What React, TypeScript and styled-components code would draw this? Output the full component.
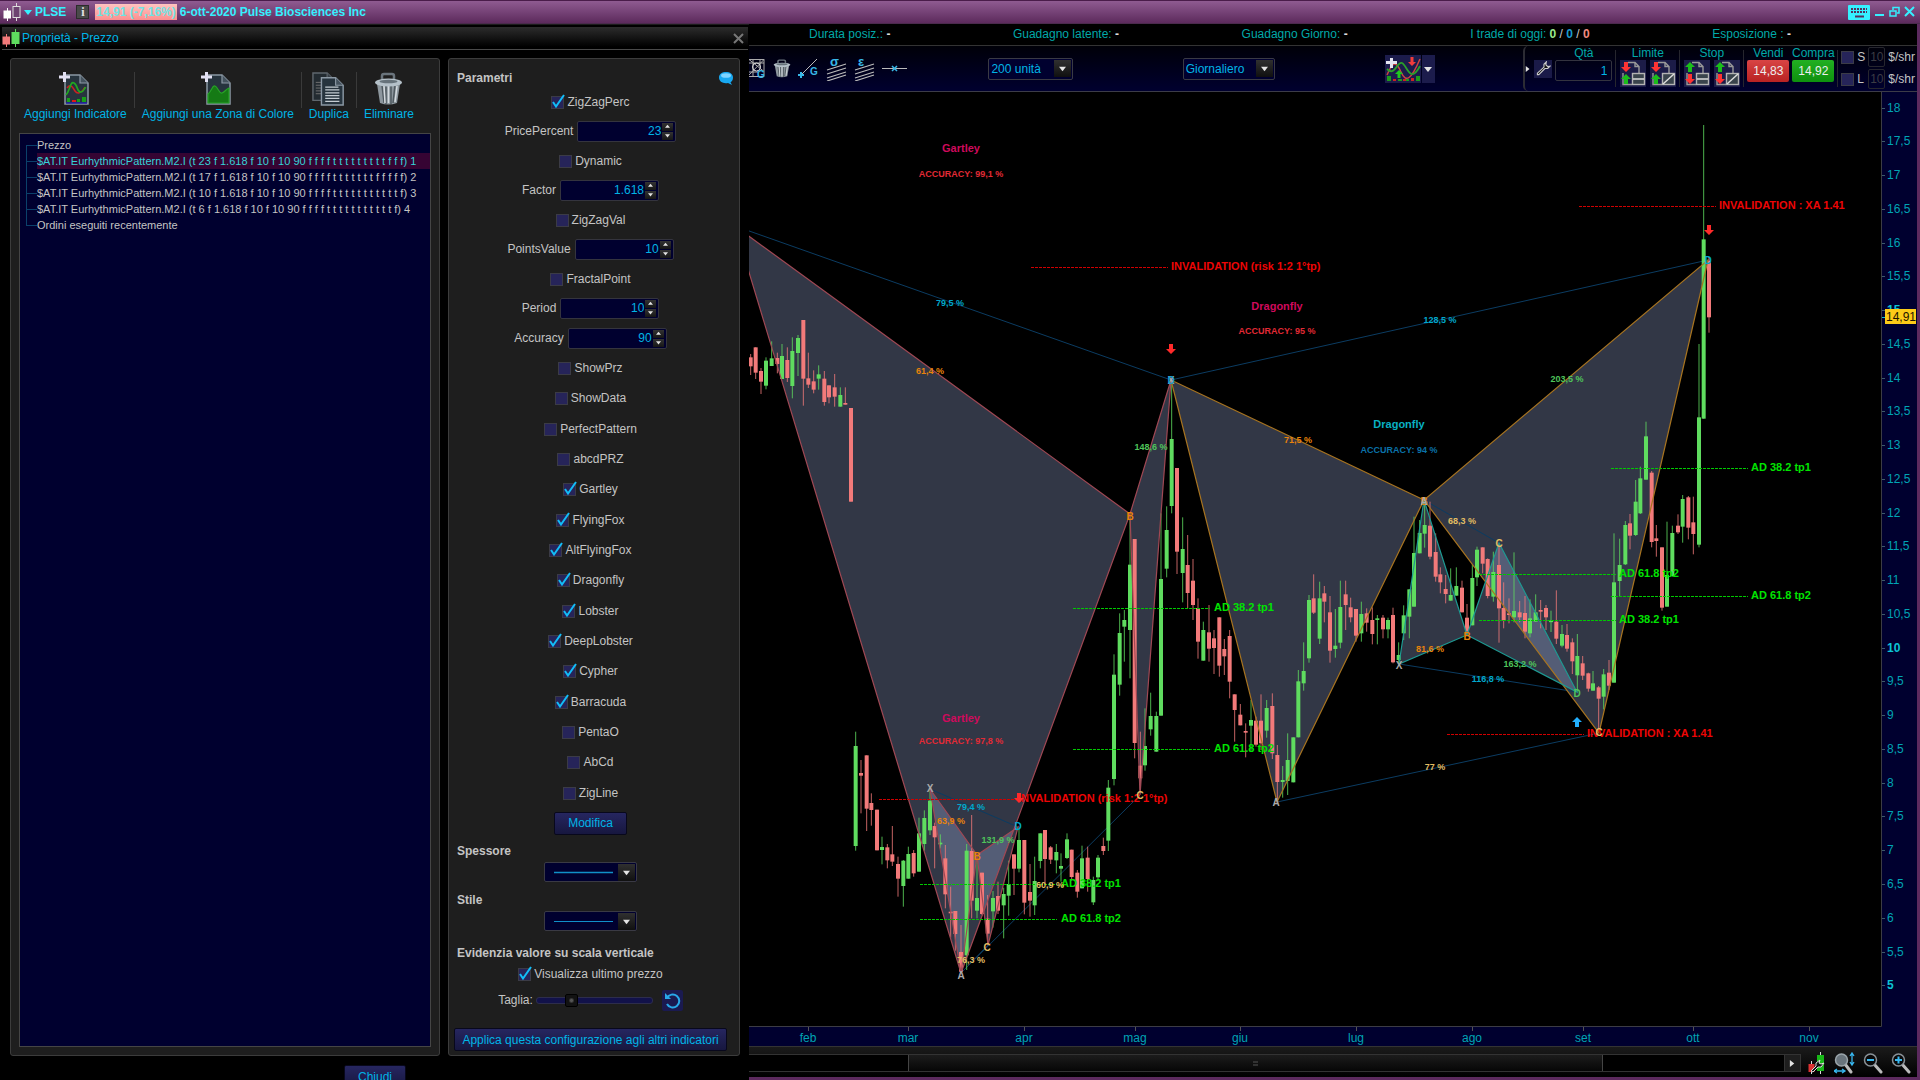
import React, { useState } from 'react';
import styled, { createGlobalStyle, css } from 'styled-components';

const c = {
  text: '#c4c4c4',
  cyan: '#00b4e6',
  teal: '#00a9a9',
  bright: '#35f0ff',
  navy: '#00002f',
  panel: '#1e1e1e',
  line: '#3c3c3c',
  purple: '#5c2a5e',
  up: '#5fdc5f',
  down: '#f27a7a',
};
const font = '"Liberation Sans", Arial, sans-serif';

const Global = createGlobalStyle`
  * { box-sizing: border-box; }
  html, body { margin: 0; background: #000; overflow: hidden; }
  body, button, input, select { font-family: ${font}; font-size: 12px; line-height: 16px; }
  button, input, select { margin: 0; padding: 0; border: 0; background: none; color: inherit; border-radius: 0; }
  button { cursor: pointer; }
  svg { display: block; flex: none; }
`;

const Screen = styled.div`
  height: 100vh;
  display: flex;
  flex-direction: column;
  background: #000;
  color: ${c.text};
  overflow: hidden;
`;

/* ---------- title bar ---------- */

const TitleBar = styled.header`
  flex: none;
  height: 24px;
  display: flex;
  align-items: center;
  gap: 3px;
  padding: 0 5px 0 3px;
  border-top: 1px solid #4a1c4a;
  border-bottom: 1px solid #4b2a4d;
  background: linear-gradient(#8f5b91, #5c2a5c);
  color: ${c.bright};
  font-weight: bold;
`;
const Symbol = styled.button`
  display: flex;
  align-items: center;
  gap: 3px;
  font-weight: bold;
`;
const InfoBadge = styled.button`
  width: 13px;
  height: 14px;
  margin: 0 3px 0 7px;
  background: #4a4a4a;
  border: 1px solid #2c2c2c;
  color: #e4e4e4;
  font: bold 12px/12px "Liberation Serif", serif;
`;
const Change = styled.span`
  height: 16px;
  padding: 0 1px;
  background: linear-gradient(#ffc4c0, #fb8f8f);
  color: #6fe4e4;
`;
const WindowTools = styled.div`
  margin-left: auto;
  display: flex;
  align-items: center;
  gap: 4px;
`;

/* ---------- dialog ---------- */

const Main = styled.div`
  flex: 1;
  min-height: 0;
  display: flex;
`;
const Dialog = styled.section`
  flex: none;
  width: 749px;
  display: flex;
  flex-direction: column;
  padding: 2px 1px 0 2px;
  border-top: 1px solid #1c1c1c;
`;
const DialogTitle = styled.div`
  flex: none;
  height: 23px;
  display: flex;
  align-items: center;
  gap: 2px;
  padding-right: 4px;
  border-bottom: 1px solid #4a4a4a;
  background: linear-gradient(#2c2c2c, #000 90%);
  color: ${c.cyan};
`;
const CloseButton = styled.button`
  margin-left: auto;
`;
const Columns = styled.div`
  flex: 1;
  min-height: 0;
  display: flex;
  gap: 8px;
  padding: 8px 8px 0;
`;
const panel = css`
  display: flex;
  flex-direction: column;
  background: ${c.panel};
  border: 1px solid ${c.line};
  border-radius: 3px;
`;
const ListPanel = styled.div`
  ${panel}
  flex: 1;
  min-width: 0;
  padding: 13px 8px 8px;
`;
const ParamPanel = styled.div`
  ${panel}
  flex: none;
  width: 292px;
  padding: 0 12px 4px 5px;
`;
const Tools = styled.div`
  height: 61px;
  display: flex;
`;
const Tool = styled.button`
  display: flex;
  flex-direction: column;
  align-items: center;
  justify-content: flex-start;
  padding: 0 7px;
  color: ${c.cyan};
  white-space: nowrap;
  &:first-child { padding-left: 5px; }
`;
const ToolSeparator = styled.span`
  width: 1px;
  height: 36px;
  background: #3a3a3a;
`;
const Tree = styled.ul`
  flex: 1;
  margin: 0;
  padding: 3px 0 0 6px;
  list-style: none;
  background: ${c.navy};
  border: 1px solid #454545;
  overflow: hidden;
`;
const TreeItem = styled.li<{ $edge?: 'first' | 'last'; $selected?: boolean }>`
  height: 16px;
  display: flex;
  white-space: nowrap;
  &::before {
    content: '';
    flex: none;
    width: 10px;
    height: ${(p) => (p.$edge === 'first' ? '8px' : p.$edge === 'last' ? '9px' : '16px')};
    margin-top: ${(p) => (p.$edge === 'first' ? '8px' : '0')};
    border-left: 1px solid #0b416b;
    background: linear-gradient(#0b416b, #0b416b) 0 ${(p) => (p.$edge === 'first' ? '0' : '8px')} / 10px 1px no-repeat;
  }
  button {
    flex: 1;
    font-size: 11px;
    text-align: left;
    white-space: nowrap;
    color: ${(p) => (p.$selected ? '#36d2d8' : c.text)};
    background: ${(p) => (p.$selected ? '#360433' : 'none')};
  }
`;
const DialogFooter = styled.div`
  flex: none;
  height: 24px;
  display: flex;
  justify-content: center;
  align-items: flex-start;
  padding-top: 9px;
  overflow: hidden;
`;
const Action = styled.button<{ $tight?: boolean }>`
  flex: none;
  height: 23px;
  padding: 0 ${(p) => (p.$tight ? 4 : 13)}px;
  color: ${c.cyan};
  background: linear-gradient(#262660, #17173f);
  border: 1px solid #08081c;
  border-radius: 2px;
  white-space: nowrap;
`;

/* ---------- parameters ---------- */

const PanelHead = styled.div`
  flex: none;
  height: 28px;
  display: flex;
  align-items: center;
  justify-content: space-between;
  padding: 10px 0 0 3px;
  font-weight: bold;
  margin-right: -6px;
`;
const Heading = styled.h3<{ $gap?: number }>`
  flex: none;
  height: 24px;
  margin: ${(p) => p.$gap ?? 0}px 0 0;
  padding-left: 3px;
  font-size: 12px;
  line-height: 26px;
`;
const CheckRow = styled.label<{ $height: number }>`
  flex: none;
  height: ${(p) => p.$height}px;
  display: flex;
  align-items: center;
  justify-content: center;
  gap: 3px;
`;
const ToggleList = styled.div`
  flex: 1;
  min-height: 0;
  display: flex;
  flex-direction: column;
  & > label { flex: 1 1 0; min-height: 0; }
`;
const CheckHolder = styled.span`
  display: grid;
  margin-top: 1px;
  & > * { grid-area: 1 / 1; }
  svg { pointer-events: none; overflow: visible; }
`;
const CheckInput = styled.input`
  appearance: none;
  flex: none;
  width: 13px;
  height: 13px;
  background: #262459;
  border: 1px solid #3b3b46;
`;
const NumberRow = styled.label`
  flex: none;
  height: 30px;
  display: flex;
  align-items: center;
  justify-content: center;
  gap: 4px;
`;
const NumberBox = styled.span`
  width: 99px;
  height: 21px;
  display: flex;
  align-items: center;
  padding-right: 2px;
  background: ${c.navy};
  border: 1px solid #34343e;
  border-radius: 2px;
  input {
    flex: 1;
    min-width: 0;
    padding-right: 1px;
    text-align: right;
    color: ${c.cyan};
  }
`;
const Steps = styled.span`
  flex: none;
  display: flex;
  flex-direction: column;
  gap: 1px;
  button {
    width: 11px;
    height: 8px;
    display: grid;
    place-items: center;
    background: linear-gradient(#333, #161616);
  }
`;
const Centered = styled.div<{ $height?: number }>`
  flex: none;
  height: ${(p) => (p.$height ? p.$height + 'px' : 'auto')};
  display: flex;
  align-items: center;
  justify-content: center;
`;
const SelectHolder = styled.span<{ $width: number; $height: number }>`
  flex: none;
  display: grid;
  align-items: center;
  width: ${(p) => p.$width}px;
  height: ${(p) => p.$height}px;
  background: ${c.navy};
  border: 1px solid #3a3a44;
  border-radius: 2px;
  & > * { grid-area: 1 / 1; }
  & > svg { pointer-events: none; margin-left: 9px; }
  select {
    appearance: none;
    width: 100%;
    height: 100%;
    padding-left: 2px;
    color: ${c.cyan};
  }
`;
const DropArrow = styled.span`
  justify-self: end;
  width: 17px;
  height: 17px;
  margin-right: 1px;
  display: grid;
  place-items: center;
  background: linear-gradient(#303030, #101010);
  pointer-events: none;
`;
const SizeRow = styled.div`
  flex: none;
  height: 32px;
  display: flex;
  align-items: center;
  justify-content: center;
  gap: 3px;
  margin-bottom: 12px;
`;
const Range = styled.input`
  appearance: none;
  width: 117px;
  height: 7px;
  margin-right: 6px;
  background: #12124a;
  border: 1px solid #2d2d4c;
  border-radius: 3px;
  &::-webkit-slider-thumb {
    appearance: none;
    width: 13px;
    height: 13px;
    background: radial-gradient(circle, #555 1px, #121212 3px);
    border: 1px solid #000;
    border-radius: 2px;
  }
`;
const ResetButton = styled.button`
  width: 21px;
  height: 21px;
  display: grid;
  place-items: center;
  background: #1a1a50;
  border-radius: 2px;
`;

/* ---------- chart side ---------- */

const ChartSide = styled.main`
  flex: 1;
  min-width: 0;
  display: flex;
  flex-direction: column;
  border-right: 3px solid ${c.purple};
  border-bottom: 3px solid ${c.purple};
`;
const InfoBar = styled.div`
  flex: none;
  height: 22px;
  display: flex;
  align-items: center;
  justify-content: space-between;
  padding: 0 126px 2px 60px;
  border-bottom: 1px solid #333;
  color: ${c.teal};
  white-space: nowrap;
  b { color: #ddd; }
`;
const Count = styled.strong<{ $color: string }>`
  && { color: ${(p) => p.$color}; }
`;
const Slash = styled.span`
  color: #ccc;
`;
const Toolbar = styled.div`
  flex: none;
  height: 46px;
  display: flex;
  align-items: center;
  background: linear-gradient(#000008, #00002f);
  border-bottom: 1px solid #3c3c48;
`;
const DrawTools = styled.div`
  display: flex;
  gap: 7px;
  button { display: grid; place-items: center; }
`;
const Spring = styled.span<{ $grow: number }>`
  flex: ${(p) => p.$grow} 1 0;
`;
const IndicatorButton = styled.button`
  display: flex;
  align-items: center;
  gap: 1px;
  height: 28px;
`;
const ArrowPart = styled.span`
  width: 13px;
  height: 28px;
  display: grid;
  place-items: center;
  background: #1c1c4c;
`;
const OrderPanel = styled.div`
  flex: none;
  height: 45px;
  display: flex;
  align-items: stretch;
  gap: 3px;
  padding: 0 2px 0 0;
  border-left: 2px solid #2c2c34;
  border-radius: 5px;
`;
const OrderColumn = styled.div<{ $width: number }>`
  width: ${(p) => p.$width}px;
  display: flex;
  flex-direction: column;
  align-items: center;
  color: ${c.teal};
  line-height: 14px;
`;
const OrderPair = styled.div`
  display: flex;
  gap: 4px;
`;
const OrderButton = styled.button`
  width: 26px;
  height: 27px;
  background: #1c1c48;
`;
const QtyInput = styled.input`
  width: 57px;
  height: 21px;
  padding-right: 4px;
  text-align: right;
  color: ${c.cyan};
  border: 1px solid #33333f;
  border-radius: 2px;
`;
const PriceButton = styled.button<{ $color: string }>`
  width: 42px;
  height: 22px;
  color: #eee;
  background: ${(p) => p.$color};
  border-radius: 2px;
`;
const OrderSeparator = styled.span`
  width: 1px;
  margin: 4px 0;
  background: #26262e;
`;
const Wrench = styled.button`
  align-self: center;
  width: 18px;
  height: 18px;
  display: grid;
  place-items: center;
  background: #1a1a48;
`;
const FeeColumn = styled.div`
  display: flex;
  flex-direction: column;
`;
const FeeRow = styled.div`
  height: 22px;
  display: flex;
  align-items: center;
  gap: 3px;
  color: ${c.text};
`;
const FeeToggle = styled.label`
  width: 24px;
  display: flex;
  align-items: center;
  gap: 3px;
`;
const FeeInput = styled.input`
  width: 17px;
  height: 20px;
  text-align: center;
  color: #3c3c44;
  border: 1px solid #26262e;
  border-radius: 2px;
`;
const ChartArea = styled.div`
  flex: 1;
  min-height: 0;
  svg { width: 100%; height: 100%; }
`;
const BottomBar = styled.div`
  flex: none;
  height: 31px;
  display: flex;
  align-items: center;
  padding: 2px 6px 0 0;
  border-top: 1px solid #333;
  background: linear-gradient(#1b1b1b, #000);
`;
const ScrollTrack = styled.div`
  flex: 1;
  height: 18px;
  display: flex;
  background: #000;
  border-top: 1px solid #333;
  border-bottom: 1px solid #333;
`;
const ScrollGap = styled.span<{ $grow: number }>`
  flex: ${(p) => p.$grow} 1 0;
`;
const ScrollThumb = styled.button`
  flex: 694 1 0;
  display: grid;
  place-items: center;
  background: linear-gradient(#1c1c1c, #060606);
  border-left: 1px solid #444;
  border-right: 1px solid #444;
`;
const ScrollEnd = styled.button`
  width: 17px;
  height: 18px;
  display: grid;
  place-items: center;
  background: #1e1e1e;
  border: 1px solid #333;
`;
const ZoomTools = styled.div`
  display: flex;
  align-items: center;
  gap: 8px;
  margin-left: 7px;
`;

/* ---------- small drawings ---------- */

const Triangle = ({ dir = 'down', size = 7, color = '#e4e4e4' }: { dir?: string; size?: number; color?: string }) => (
  <svg width={size} height={size} viewBox="0 0 8 8">
    <path fill={color} d={dir === 'down' ? 'M0 2h8L4 7z' : dir === 'up' ? 'M0 6h8L4 1z' : 'M1 0v8l5-4z'} />
  </svg>
);

const CandlePair = ({ a, b, hollow }: { a: string; b: string; hollow?: boolean }) => (
  <svg width="18" height="19" viewBox="0 0 18 19">
    <path stroke={a} d="M4.500 5v13" />
    <rect x="0.500" y="7.500" width="7.500" height="8" fill={a} />
    <path stroke={b} d="M13.500 0v3M13.500 14v4" />
    <rect x="10" y="3.500" width="7" height="11" fill={hollow ? '#6d4270' : b} stroke={b} />
  </svg>
);

const Doc = ({ x = 0, y = 0, children }: { x?: number; y?: number; children?: React.ReactNode }) => (
  <g transform={`translate(${x} ${y})`}>
    <path d="M1 1h15l8 8v21H1z" fill="#27343e" stroke="#8b98a4" strokeWidth="1.500" />
    <path d="M16 1v8h8" fill="#45535e" stroke="#8b98a4" strokeWidth="1.200" />
    {children}
  </g>
);

const PlusSign = () => <path d="M4 0h3v3.500h4v3H7V10H4V6.500H0v-3h4z" fill="#e2e0f2" />;

const AddIndicatorIcon = () => (
  <svg width="33" height="34" viewBox="0 0 33 34">
    <Doc x={5} y={2}>
      <path d="M3 14c4-5 6 0 8 3s6 3 10-4" fill="none" stroke="#c22" strokeWidth="1.500" />
      <path d="M2 21c4-4 4-14 8-12s3 10 7 9 3-5 5-4" fill="none" stroke="#20a820" strokeWidth="1.700" />
      <path d="M3 24h3v4H3zM13 25h3v3h-3zM18 23h4v5h-4z" fill="#18a018" />
      <path d="M8 26h4v2H8z" fill="#e01818" />
      <path d="M2 29h21" stroke="#22a" strokeWidth="1.500" />
    </Doc>
    <PlusSign />
  </svg>
);
const AddZoneIcon = () => (
  <svg width="33" height="34" viewBox="0 0 33 34">
    <Doc x={5} y={2}>
      <path d="M2 20c4-3 4-9 7-8s4 8 7 7 4-4 7-5v15H2z" fill="#157a15" stroke="#27a327" strokeWidth="1.200" />
    </Doc>
    <PlusSign />
  </svg>
);
const DuplicateIcon = () => (
  <svg width="34" height="34" viewBox="0 0 36 36">
    <g opacity="0.600">
      <Doc><path d="M4 11h12M4 14h12M4 17h12M4 20h12M4 23h12" stroke="#aaa" /></Doc>
    </g>
    <Doc x={9} y={5}><path d="M5 11h14M5 14h15M5 17h15M5 20h15M5 23h15M5 26h15" stroke="#c4ccd2" strokeWidth="1.300" /></Doc>
  </svg>
);
const TrashIcon = ({ width = 29, height = 34 }: { width?: number; height?: number }) => (
  <svg width={width} height={height} viewBox="0 0 29 34" preserveAspectRatio="none">
    <path d="M8 8V4q0-2 2-2h8q2 0 2 2v4" fill="none" stroke="#6a747c" strokeWidth="2.500" />
    <path d="M3 12l3 19q8 3 17 0l3-19z" fill="#8d979e" />
    <path d="M8 13l2 18M12 14v18M17 14v18M21 13l-2 18" stroke="#4f595f" strokeWidth="1.500" />
    <path d="M10 14l1 17M14.500 14v17M23 14l-2 16" stroke="#d4dade" strokeWidth="1.500" />
    <ellipse cx="14.500" cy="10.500" rx="13.500" ry="4" fill="#b4c0c8" />
    <ellipse cx="14.500" cy="9.500" rx="9" ry="1.800" fill="#66727a" />
  </svg>
);

const GridGIcon = () => (
  <svg width="17" height="21" viewBox="0 0 17 21">
    <path d="M0 1.500h15v17H0M0 5h15M0 14h9M4 1.500v17M11 1.500v8M0 1.500l15 12M15 1.500L0 17" fill="none" stroke="#aaa" />
    <circle cx="7.500" cy="9" r="4" fill="none" stroke="#ddd" />
    <text x="8" y="20" fontSize="10" fontWeight="bold" fontFamily={font} fill="#38b8e8">G</text>
  </svg>
);
const LineGIcon = () => (
  <svg width="21" height="21" viewBox="0 0 21 21">
    <path d="M3 17L19 1" stroke="#bbb" />
    <path d="M0 17h6M3 14v6" stroke="#38b8e8" strokeWidth="2" />
    <text x="12" y="17" fontSize="10" fontWeight="bold" fontFamily={font} fill="#38b8e8">G</text>
  </svg>
);
const ChannelIcon = ({ letter }: { letter: string }) => (
  <svg width="21" height="24" viewBox="0 0 21 24">
    <path d="M1 13L20 7M1 17l19-6M1 21l19-6M1 24l19-6" stroke="#bbb" strokeWidth="1.200" />
    <text x="4" y="9" fontSize="13" fontWeight="bold" fontFamily={font} fill="#38b8e8">{letter}</text>
  </svg>
);
const LineXIcon = () => (
  <svg width="25" height="21" viewBox="0 0 25 21">
    <path d="M0 10.500h25" stroke="#bbb" />
    <path d="M10 8l5 5M15 8l-5 5" stroke="#38b8e8" strokeWidth="1.500" />
  </svg>
);
const IndicatorIcon = () => (
  <svg width="36" height="28" viewBox="0 0 36 28">
    <rect width="36" height="28" fill="#1c1c4c" />
    <path d="M2 20c6-14 9-14 14-3s10 8 19-13" fill="none" stroke="#c44" strokeWidth="1.500" />
    <path d="M2 14c8 8 10-8 15-6s8 22 18 3" fill="none" stroke="#2aa02a" strokeWidth="1.800" />
    <path d="M5 3h3v3h4v3H8v4H5V9H1V6h4z" fill="#e4e4f0" />
    <path d="M14 15l-4 4h2.500v4h3v-4H18z" fill="#1ec81e" />
    <path d="M27 11l-4-4h2.500V2h3v5H31z" fill="#f23c3c" />
    <path d="M2 21h4v5H2zM13 24h4v2h-4zM31 21h4v5h-4zM21 24h3v2h-3z" fill="#1c9c1c" />
    <path d="M8 24h3v2H8zM18 24h3v2h-3zM26 23h3v3h-3z" fill="#c22" />
  </svg>
);
const OrderIcon = ({ top, topDir, diagonal }: { top: string; topDir: 'up' | 'down'; diagonal?: boolean }) => {
  const bottom = top === '#f33' ? '#1bbd1b' : '#f33';
  const up = 'M6 2l-5 5h3v5h4V7h3z';
  const down = 'M6 12L1 7h3V2h4v5h3z';
  return (
    <svg width="26" height="27" viewBox="0 0 26 27">
      <path d="M8 2.500h7l4 4V13M15 2.500v4h4M3 13v11.500h9" fill="none" stroke="#999" strokeWidth="1.400" />
      <path d={topDir === 'up' ? up : down} fill={top} />
      <g transform="translate(0 12)"><path d={topDir === 'up' ? down : up} fill={bottom} /></g>
      <rect x="12.500" y="13.500" width="12" height="11" fill="#3a444c" stroke="#b4b4b4" strokeWidth="1.400" />
      <path d={diagonal ? 'M13 24l11-10' : 'M13 19h11'} stroke="#ddd" strokeWidth="1.500" />
    </svg>
  );
};
const WrenchShape = ({ size = 15 }: { size?: number }) => (
  <svg width={size} height={size} viewBox="0 0 16 16">
    <path d="M11 1L8.500 3.500v3L1.500 13v1.500H3L9.500 8h3L15 5.500l-2.500.5-2-2z" fill="#111" stroke="#ccc" strokeWidth="1.200" />
  </svg>
);
const Magnifier = ({ sign }: { sign?: string }) => (
  <svg width="20" height="22" viewBox="0 0 20 22">
    <path d="M11 12l7 8" stroke="#bbb" strokeWidth="3" strokeLinecap="round" />
    <circle cx="7.500" cy="8" r="6" fill="#0a0a0a" stroke="#8a9298" strokeWidth="1.500" />
    <path d={sign === '+' ? 'M4 8h7M7.500 4.500v7' : 'M4 8h7'} stroke="#38b8f0" strokeWidth="2" />
  </svg>
);

/* ---------- chart data ---------- */

type Segment = { x: number; y: number; step: number; bars: string };

// Each bar: colour, x, high, body top, body bottom, low, relative to the segment origin.
const segments: Segment[] = [
  {
    x: 740, y: 240, step: 3,
    bars: `r32 342 352 379 405,r47 322 322 398 417,r63 384 393 425 462,g78 352 362 437 448,g95 304 355 378 378,r112 338 354 372 400,g126 312 348 417 417,r142 322 360 414 426,g157 292 333 438 475,g174 285 294 339 408,r190 240 240 416 497,r205 338 415 434 444,r221 391 424 449 460,g236 376 403 416 449,r253 393 416 486 497,r267 436 436 472 490,r284 402 442 470 500,g301 442 465 500 500,r316 442 489 494 494,r333 504 504 785 785,g1139 1120 1179 1334 1367,g1153 1110 1140 1160 1265,g1170 830 974 1170 1315,r1184 897 897 1509 1555,g1263 820 1017 1427 1427,g1280 799 870 986 1012,g1295 425 597 798 820,r1311 684 684 935 1002,g1328 832 927 999 1087,r1343 885 975 1059 1105,r1359 957 1022 1095 1140,r1374 1075 1104 1205 1256,g1390 1145 1170 1262 1262,r1407 1095 1177 1226 1265,r1422 1170 1195 1224 1302,r1438 1132 1132 1277 1310`,
  },
  {
    x: 740, y: 640, step: 3,
    bars: `g347 275 318 618 632,r363 360 399 407 520,r380 346 346 506 573,r394 460 489 510 557,r411 509 509 631 631,g426 590 621 630 673,r442 612 622 661 685,r457 558 643 665 678,r474 650 672 716 770,g490 660 662 738 800,g505 620 642 716 716,r521 630 639 700 710,g537 533 580 695 695,g553 511 534 612 632,g570 445 482 571 585,r584 548 558 592 685,g601 583 608 613 625,r616 615 655 763 805,r632 740 815 820 893,r646 813 813 882 932,r663 855 936 995 1000,g680 612 632 946 990,r695 525 633 782 835,g711 655 774 812 835,r726 698 698 822 825,r743 765 836 881 915,g759 753 774 814 863,r774 725 768 812 822,g791 743 762 796 895,g806 662 732 767 827,r822 643 643 686 765,g837 560 600 686 697,r853 600 600 788 823,r870 672 756 782 830,g884 650 723 796 825,g901 580 580 663 685,r915 570 570 657 735,r932 618 622 659 672,g949 612 636 661 700,g963 640 678 686 725,g981 580 598 654 657,r995 629 629 711 722,r1012 690 698 755 773,g1026 617 655 745 745,r1043 620 653 717 755,g1060 710 720 787 795,g1074 645 653 712 722,r1090 593 618 633 645,g1105 420 443 602 633,g1122 43 104 417 436,r1201 275 377 415 460,g1215 205 318 376 392,g1232 158 228 268 287,g1249 215 228 335 335`,
  },
  {
    x: 1160, y: 600, step: 3,
    bars: `r193 117 147 169 225,r209 90 108 245 295,r224 283 283 330 425,r241 312 344 376 376,r257 370 393 398 472,g273 300 360 377 452,r288 350 362 434 440,r303 283 362 430 450,g320 300 324 392 413,r337 280 318 460 477,r352 435 465 546 600,g368 498 540 546 593,g383 400 480 543 585,g400 412 412 547 547,g415 210 244 412 412,g431 127 213 250 272,g447 -15 0 175 188,r461 -77 -5 38 42,g479 -55 -5 116 132,r493 -42 -20 5 67,r510 -12 37 152 188,g526 27 137 147 173,g541 -58 21 128 145,r557 -58 -17 15 90,r572 -7 22 52 67,r588 27 27 107 125,g604 5 42 100 125,r620 25 40 68 95,r637 22 60 102 133,g652 45 55 60 133,r669 45 53 88 115,g684 53 60 88 115,r699 23 45 187 190,g716 127 165 180 190`,
  },
  {
    x: 1360, y: 460, step: 3,
    bars: `g131 436 466 520 540,g148 388 388 470 535,g162 170 279 440 440,g179 180 219 280 280,g194 125 195 221 263,r210 125 197 290 298,r227 220 276 350 365,r241 322 343 367 400,r257 345 387 402 430,g272 325 405 422 422,g289 322 378 407 407,r306 362 383 457 457,r321 432 473 515 520,g337 313 354 496 496,g351 260 269 352 378,r368 262 262 311 340,r383 295 297 408 415,g400 275 336 410 425,r417 255 315 445 548,r431 367 444 481 505,r447 415 460 465 490,g462 277 453 472 487,r479 423 457 472 487,r495 408 459 515 535,g510 418 475 520 532,g527 403 457 485 485,r542 420 450 455 505,r558 435 444 472 510,g573 452 482 485 516,r589 391 485 536 552,g606 495 522 557 562,r621 492 525 566 575,r637 535 547 604 642,g652 522 588 646 695,r668 588 610 647 660,r685 638 640 686 695,g699 633 670 692 692,r716 678 682 716 815,g731 627 643 710 748,r747 600 638 677 690,g762 220 367 668 668,g779 236 315 363 408,g796 183 195 313 315,r810 162 190 227 268,g827 60 125 225 228,g841 20 55 160 162,g858 -115 -71 59 59,r875 33 38 246 262,r889 195 235 243 290,r906 262 262 443 452,g921 185 345 440 440,g937 197 219 348 350,r954 163 197 217 222,g968 105 117 200 248,r985 108 112 203 238,r1000 110 187 222 283,g1017 -348 -128 254 262,g1031 -1005 -662 -124 -124,r1047 -610 -598 -428 -382`,
  },
];

const bars = segments.flatMap((s) =>
  s.bars.split(',').map((raw) => {
    const [x, ...ys] = raw.slice(1).split(' ').map(Number);
    const [high, top, bottom, low] = ys.map((v) => s.y + v / s.step);
    return { color: raw[0] === 'g' ? c.up : c.down, x: s.x + x / s.step, high, top, bottom, low };
  }),
);

const ROSE = '#a04854';
const AMBER = '#a87420';
const SEA = '#1d9a92';
const patterns = [
  { color: ROSE, pts: [[735, 226], [961, 973], [1130, 514], [1140, 795], [1171, 380]] },
  { color: AMBER, pts: [[1171, 380], [1277, 802], [1424, 500], [1599, 733], [1708, 260]] },
  { color: ROSE, pts: [[930, 789], [961, 973], [977, 855], [988, 945], [1018, 827]] },
  { color: SEA, pts: [[1399, 664], [1424, 500], [1467, 635], [1499, 543], [1577, 692]] },
];
const path = (pts: number[][], ids: number[]) => 'M' + ids.map((i) => pts[i].join(' ')).join('L') + (ids.length > 2 ? 'Z' : '');

const levels: [number, number, string, number, string][] = [
  [1073, 608.5, '#00c800', 1214, 'AD 38.2 tp1'],
  [1073, 749.5, '#00c800', 1214, 'AD 61.8 tp2'],
  [920, 884.5, '#00c800', 1061, 'AD 38.2 tp1'],
  [920, 919.5, '#00c800', 1061, 'AD 61.8 tp2'],
  [1479, 574.5, '#00c800', 1619, 'AD 61.8 tp2'],
  [1479, 620.5, '#00c800', 1619, 'AD 38.2 tp1'],
  [1611, 468.5, '#00c800', 1751, 'AD 38.2 tp1'],
  [1611, 596.5, '#00c800', 1751, 'AD 61.8 tp2'],
  [1031, 267.5, '#d00000', 1171, 'INVALIDATION (risk 1:2 1°tp)'],
  [879, 799.5, '#d00000', 1018, 'INVALIDATION (risk 1:2 1°tp)'],
  [1447, 734.5, '#d00000', 1587, 'INVALIDATION : XA 1.41'],
  [1579, 206.5, '#d00000', 1719, 'INVALIDATION : XA 1.41'],
];

const CY = '#00a8cc';
const OR = '#e8830a';
const GR = '#4fc45a';
const YE = '#e2bd62';
const ratios: [number, number, string, string][] = [
  [950, 303, CY, '79,5 %'], [930, 371, OR, '61,4 %'], [1151, 447, GR, '148,6 %'],
  [971, 807, CY, '79,4 %'], [951, 821, OR, '63,9 %'], [998, 840, GR, '131,9 %'],
  [1050, 885, YE, '60,9 %'], [971, 960, YE, '76,3 %'], [1440, 320, CY, '128,5 %'],
  [1298, 440, OR, '71,5 %'], [1462, 521, YE, '68,3 %'], [1567, 379, GR, '203,5 %'],
  [1430, 649, OR, '81,6 %'], [1520, 664, GR, '163,2 %'], [1488, 679, CY, '116,8 %'],
  [1435, 767, YE, '77 %'],
  [961, 174, '#e22a35', 'ACCURACY: 99,1 %'], [1277, 331, '#e22a35', 'ACCURACY: 95 %'],
  [1399, 450, '#0a72aa', 'ACCURACY: 94 %'], [961, 741, '#e22a35', 'ACCURACY: 97,8 %'],
];
const names: [number, number, string, string][] = [
  [961, 148, '#cf0a5c', 'Gartley'], [1277, 306, '#cf0a5c', 'Dragonfly'],
  [1399, 424, '#08b0c4', 'Dragonfly'], [961, 718, '#cf0a5c', 'Gartley'],
];
const points: [number, number, string, string][] = [
  [1130, 516, OR, 'B'], [1171, 380, '#aaa', 'X'], [1171, 380, '#1a9ed0', 'D'],
  [1424, 501, OR, 'B'], [1424, 501, '#aaa', 'A'], [1140, 795, YE, 'C'],
  [930, 788, '#aaa', 'X'], [961, 975, '#aaa', 'A'], [977, 856, OR, 'B'],
  [987, 947, YE, 'C'], [1018, 826, CY, 'D'], [1276, 802, '#aaa', 'A'],
  [1399, 665, '#aaa', 'X'], [1467, 636, OR, 'B'], [1499, 543, YE, 'C'],
  [1577, 693, GR, 'D'], [1599, 732, YE, 'C'], [1708, 260, CY, 'D'],
];
const months: [number, string][] = [
  [808, 'feb'], [908, 'mar'], [1024, 'apr'], [1135, 'mag'], [1240, 'giu'],
  [1356, 'lug'], [1472, 'ago'], [1583, 'set'], [1693, 'ott'], [1809, 'nov'],
];
const prices = Array.from({ length: 27 }, (_, i) => 18 - i / 2);

const DownMark = ({ x, y }: { x: number; y: number }) => (
  <path d={`M${x - 2} ${y - 5}h4v5h3l-5 5-5-5h3z`} fill="#ff2a2a" />
);

const Chart = () => (
  <svg viewBox="749 92 1168 954" fontFamily={font} role="img" aria-label="Grafico PLSE giornaliero">
    <g fill="rgba(167,183,233,0.3)">
      {patterns.map((p, i) => (
        <React.Fragment key={i}>
          <path d={path(p.pts, [0, 1, 2])} />
          <path d={path(p.pts, [2, 3, 4])} />
        </React.Fragment>
      ))}
    </g>
    <g stroke="#0b3c62">
      {patterns.map((p, i) => (
        <React.Fragment key={i}>
          <path d={path(p.pts, [0, 4])} />
          <path d={path(p.pts, [1, 3])} />
        </React.Fragment>
      ))}
    </g>
    {bars.map((b, i) => (
      <g key={i} fill={b.color}>
        <rect x={b.x - 0.5} y={b.high} width="1" height={b.low - b.high} opacity="0.800" />
        <rect x={b.x - 2} y={b.top} width="4" height={Math.max(1.5, b.bottom - b.top)} />
      </g>
    ))}
    {patterns.map((p, i) => (
      <g key={i} fill="none" stroke={p.color} strokeWidth="1.200">
        <path d={path(p.pts, [0, 1, 2])} />
        <path d={path(p.pts, [2, 3, 4])} />
      </g>
    ))}
    {levels.map(([x, y, color, lx, label], i) => (
      <g key={i}>
        <path d={`M${x} ${y}h137`} stroke={color} strokeDasharray="3 1" />
        <text x={lx} y={Math.round(y) + 2} fontSize="11" fontWeight="bold" fill={color === '#d00000' ? '#ee0505' : '#00e400'}>{label}</text>
      </g>
    ))}
    <g fontSize="9" fontWeight="bold" textAnchor="middle">
      {ratios.map(([x, y, color, label]) => (
        <text key={label + x} x={x} y={y + 3} fill={color}>{label}</text>
      ))}
    </g>
    <g fontSize="11" fontWeight="bold" textAnchor="middle">
      {names.map(([x, y, color, label]) => (
        <text key={label + x} x={x} y={y + 4} fill={color}>{label}</text>
      ))}
    </g>
    <g fontSize="10" fontWeight="bold" textAnchor="middle">
      {points.map(([x, y, color, label], i) => (
        <text key={i} x={x} y={y + 4} fill={color}>{label}</text>
      ))}
    </g>
    <DownMark x={1171} y={349} />
    <DownMark x={1019} y={798} />
    <DownMark x={1709} y={230} />
    <path d="M1575 727h4v-5h3l-5-5-5 5h3z" fill="#22b0ff" />

    <rect x="1882" y="92" width="40" height="954" fill={c.navy} />
    <rect x="740" y="1027" width="1180" height="20" fill={c.navy} />
    <path d="M749 1026.500h1132.500V92" fill="none" stroke="#3c3c44" />
    <g fontSize="12" fill="#00a4b4">
      {prices.map((p) => {
        const y = Math.round(107.5 + (18 - p) * 67.52);
        const bold = p % 5 === 0;
        return (
          <g key={p}>
            <path d={`M1882 ${y + 0.5}h3`} stroke="#3c5a6a" />
            <text x="1887" y={y + 4} fontWeight={bold ? 'bold' : 'normal'} fill={bold ? '#0cc4d4' : undefined}>
              {String(p).replace('.', ',')}
            </text>
          </g>
        );
      })}
      {months.map(([x, m]) => (
        <g key={m}>
          <path d={`M${x + 0.5} 1027v4`} stroke="#555" />
          <text x={x} y="1042" textAnchor="middle">{m}</text>
        </g>
      ))}
    </g>
    <path d="M1882 317.500h3" stroke="#0cc4d4" />
    <rect x="1885" y="309" width="31" height="15" fill="#fccb18" />
    <text x="1886" y="321" fontSize="12" fill="#1c1400">14,91</text>
  </svg>
);

/* ---------- controls ---------- */

const Tick = ({ label, on, height = 29 }: { label: string; on?: boolean; height?: number }) => {
  const [checked, setChecked] = useState(!!on);
  return (
    <CheckRow $height={height}>
      <CheckHolder>
        <CheckInput type="checkbox" checked={checked} onChange={(e) => setChecked(e.target.checked)} />
        {checked && (
          <svg width="13" height="13" viewBox="0 0 13 13">
            <path d="M2 6l3 4.500L13 -1" fill="none" stroke="#12bdf8" strokeWidth="2" />
          </svg>
        )}
      </CheckHolder>
      {label}
    </CheckRow>
  );
};

const NumberField = ({ label, value }: { label: string; value: string }) => (
  <NumberRow>
    {label}
    <NumberBox>
      <input inputMode="decimal" defaultValue={value} />
      <Steps>
        <button type="button" aria-label={`${label} +`}><Triangle dir="up" size={5} /></button>
        <button type="button" aria-label={`${label} -`}><Triangle size={5} /></button>
      </Steps>
    </NumberBox>
  </NumberRow>
);

const LineSelect = ({ label, weight }: { label: string; weight: number }) => (
  <Centered>
    <SelectHolder $width={93} $height={20}>
      <select aria-label={label}><option aria-label="Linea continua" /></select>
      <svg width="59" height="5"><path d="M0 2.500h59" stroke="#1090c8" strokeWidth={weight} /></svg>
      <DropArrow><Triangle /></DropArrow>
    </SelectHolder>
  </Centered>
);

const tree = [
  'Prezzo',
  '$AT.IT EurhythmicPattern.M2.I (t 23 f 1.618 f 10 f 10 90 f f f f t t t t t t t t t f f f) 1',
  '$AT.IT EurhythmicPattern.M2.I (t 17 f 1.618 f 10 f 10 90 f f f f t t t t t t t f f f f f) 2',
  '$AT.IT EurhythmicPattern.M2.I (t 10 f 1.618 f 10 f 10 90 f f f f t t t t t t t t t t t f) 3',
  '$AT.IT EurhythmicPattern.M2.I (t 6 f 1.618 f 10 f 10 90 f f f f t t t t t t t t t t t f) 4',
  'Ordini eseguiti recentemente',
];
const toggles: [string, boolean][] = [
  ['ShowPrz', false], ['ShowData', false], ['PerfectPattern', false], ['abcdPRZ', false],
  ['Gartley', true], ['FlyingFox', true], ['AltFlyingFox', true], ['Dragonfly', true],
  ['Lobster', true], ['DeepLobster', true], ['Cypher', true], ['Barracuda', true],
  ['PentaO', false], ['AbCd', false], ['ZigLine', false],
];

const Properties = () => {
  const [selected, setSelected] = useState(1);
  return (
    <Dialog aria-label="Proprietà - Prezzo">
      <DialogTitle>
        <CandlePair a={c.down} b={c.up} />
        Proprietà - Prezzo
        <CloseButton aria-label="Chiudi finestra">
          <svg width="11" height="11" viewBox="0 0 11 11"><path d="M1 1l9 9M10 1l-9 9" stroke="#777" strokeWidth="2" /></svg>
        </CloseButton>
      </DialogTitle>
      <Columns>
        <ListPanel>
          <Tools>
            <Tool><AddIndicatorIcon />Aggiungi Indicatore</Tool>
            <ToolSeparator />
            <Tool><AddZoneIcon />Aggiungi una Zona di Colore</Tool>
            <ToolSeparator />
            <Tool><DuplicateIcon />Duplica</Tool>
            <ToolSeparator />
            <Tool><TrashIcon />Eliminare</Tool>
          </Tools>
          <Tree>
            {tree.map((t, i) => (
              <TreeItem key={t} $selected={i === selected} $edge={i === 0 ? 'first' : i === tree.length - 1 ? 'last' : undefined}>
                <button onClick={() => setSelected(i)}>{t}</button>
              </TreeItem>
            ))}
          </Tree>
        </ListPanel>
        <ParamPanel>
          <PanelHead>
            Parametri
            <svg width="14" height="13" viewBox="0 0 14 13">
              <path d="M7 0c4 0 7 2 7 5.500 0 2.500-1 4-2.500 4.800L13 13l-4-2C4 12 0 9.500 0 5.500 0 2 3 0 7 0z" fill="#18a8f0" />
              <ellipse cx="7" cy="3.500" rx="5" ry="2.300" fill="#7fd4ff" />
            </svg>
          </PanelHead>
          <Tick label="ZigZagPerc" on />
          <NumberField label="PricePercent" value="23" />
          <Tick label="Dynamic" />
          <NumberField label="Factor" value="1.618" />
          <Tick label="ZigZagVal" />
          <NumberField label="PointsValue" value="10" />
          <Tick label="FractalPoint" />
          <NumberField label="Period" value="10" />
          <NumberField label="Accuracy" value="90" />
          <ToggleList>
            {toggles.map(([label, on]) => <Tick key={label} label={label} on={on} />)}
          </ToggleList>
          <Centered $height={30}><Action>Modifica</Action></Centered>
          <Heading>Spessore</Heading>
          <LineSelect label="Spessore" weight={1.5} />
          <Heading $gap={5}>Stile</Heading>
          <LineSelect label="Stile" weight={1} />
          <Heading $gap={9}>Evidenzia valore su scala verticale</Heading>
          <Tick label="Visualizza ultimo prezzo" on height={20} />
          <SizeRow>
            <label htmlFor="size">Taglia:</label>
            <Range id="size" type="range" min={0} max={100} defaultValue={28} />
            <ResetButton aria-label="Ripristina">
              <svg width="17" height="17" viewBox="0 0 17 17">
                <path d="M3 6a6.500 6.500 0 1 1 0 6" fill="none" stroke="#28a8e8" strokeWidth="2" />
                <path d="M1 1v6h6z" fill="#28a8e8" />
              </svg>
            </ResetButton>
          </SizeRow>
          <Action $tight>Applica questa configurazione agli altri indicatori</Action>
        </ParamPanel>
      </Columns>
      <DialogFooter><Action>Chiudi</Action></DialogFooter>
    </Dialog>
  );
};

const DropDown = ({ label, value, width }: { label: string; value: string; width: number }) => (
  <SelectHolder $width={width} $height={22}>
    <select aria-label={label}><option>{value}</option></select>
    <DropArrow><Triangle /></DropArrow>
  </SelectHolder>
);

const Fee = ({ id, label }: { id: string; label: string }) => (
  <FeeRow>
    <FeeToggle><CheckInput type="checkbox" />{label}</FeeToggle>
    <FeeInput id={id} aria-label={`${label} $/shr`} defaultValue="10" />
    <label htmlFor={id}>$/shr</label>
  </FeeRow>
);

export default function App() {
  return (
    <Screen>
      <Global />
      <TitleBar>
        <CandlePair a="#fff" b="#ddd" hollow />
        <Symbol><Triangle size={8} color={c.bright} />PLSE</Symbol>
        <InfoBadge aria-label="Informazioni">i</InfoBadge>
        <Change>14,91 (-7,16%)</Change>
        <span>6-ott-2020 Pulse Biosciences Inc</span>
        <WindowTools>
          <button aria-label="Tastiera">
            <svg width="22" height="15" viewBox="0 0 22 15">
              <rect width="22" height="15" rx="1" fill={c.bright} />
              <path d="M3 4h16M3 7h16" stroke="#54305a" strokeWidth="2" strokeDasharray="2 1" />
              <path d="M7 11.500h9" stroke="#54305a" strokeWidth="2" />
            </svg>
          </button>
          <button aria-label="Riduci"><svg width="11" height="12"><path d="M1 9h9" stroke={c.bright} strokeWidth="2" /></svg></button>
          <button aria-label="Ripristina">
            <svg width="11" height="12" viewBox="0 0 11 12" fill="none" stroke={c.bright} strokeWidth="1.500"><path d="M4 4V1.500h6V7H8M1 5h6v5H1z" /></svg>
          </button>
          <button aria-label="Chiudi"><svg width="11" height="12" viewBox="0 0 11 12"><path d="M1 1l9 9M10 1l-9 9" stroke={c.bright} strokeWidth="2" /></svg></button>
        </WindowTools>
      </TitleBar>
      <Main>
        <Properties />
        <ChartSide>
          <InfoBar>
            <span>Durata posiz.: <b>-</b></span>
            <span>Guadagno latente: <b>-</b></span>
            <span>Guadagno Giorno: <b>-</b></span>
            <span>
              I trade di oggi: <Count $color="#9be88a">0</Count> <Slash>/</Slash> <Count $color="#1a9ad0">0</Count> <Slash>/</Slash> <Count $color="#f08a80">0</Count>
            </span>
            <span>Esposizione : <b>-</b></span>
          </InfoBar>
          <Toolbar>
            <DrawTools>
              <button aria-label="Griglia"><GridGIcon /></button>
              <button aria-label="Elimina oggetti"><TrashIcon width={18} height={19} /></button>
              <button aria-label="Linea G"><LineGIcon /></button>
              <button aria-label="Canale sigma"><ChannelIcon letter="σ" /></button>
              <button aria-label="Canale epsilon"><ChannelIcon letter="ε" /></button>
              <button aria-label="Segmento"><LineXIcon /></button>
            </DrawTools>
            <Spring $grow={82} />
            <DropDown label="Unità" value="200 unità" width={85} />
            <Spring $grow={110} />
            <DropDown label="Periodo" value="Giornaliero" width={92} />
            <Spring $grow={111} />
            <IndicatorButton aria-label="Indicatori">
              <IndicatorIcon />
              <ArrowPart><Triangle size={8} /></ArrowPart>
            </IndicatorButton>
            <Spring $grow={89} />
            <OrderPanel>
              <Centered><Triangle dir="right" size={6} /></Centered>
              <Wrench aria-label="Impostazioni ordini"><WrenchShape /></Wrench>
              <OrderColumn $width={57}>
                <label htmlFor="qty">Qtà</label>
                <QtyInput id="qty" defaultValue="1" />
              </OrderColumn>
              <OrderSeparator />
              <OrderColumn $width={57}>
                Limite
                <OrderPair>
                  <OrderButton aria-label="Limite"><OrderIcon top="#f33" topDir="down" /></OrderButton>
                  <OrderButton aria-label="Limite inclinato"><OrderIcon top="#f33" topDir="down" diagonal /></OrderButton>
                </OrderPair>
              </OrderColumn>
              <OrderSeparator />
              <OrderColumn $width={57}>
                Stop
                <OrderPair>
                  <OrderButton aria-label="Stop"><OrderIcon top="#1bbd1b" topDir="up" /></OrderButton>
                  <OrderButton aria-label="Stop inclinato"><OrderIcon top="#1bbd1b" topDir="up" diagonal /></OrderButton>
                </OrderPair>
              </OrderColumn>
              <OrderSeparator />
              <OrderColumn $width={42}>
                Vendi
                <PriceButton $color="linear-gradient(#d84444, #b82222)">14,83</PriceButton>
              </OrderColumn>
              <OrderColumn $width={42}>
                Compra
                <PriceButton $color="linear-gradient(#22b022, #0e900e)">14,92</PriceButton>
              </OrderColumn>
              <OrderSeparator />
              <FeeColumn>
                <Fee id="fee-s" label="S" />
                <Fee id="fee-l" label="L" />
              </FeeColumn>
            </OrderPanel>
          </Toolbar>
          <ChartArea><Chart /></ChartArea>
          <BottomBar>
            <ScrollTrack>
              <ScrollGap $grow={159} />
              <ScrollThumb aria-label="Scorri grafico">
                <svg width="5" height="5"><path d="M0 1h5M0 4h5" stroke="#555" /></svg>
              </ScrollThumb>
              <ScrollGap $grow={181} />
            </ScrollTrack>
            <ScrollEnd aria-label="Avanti"><Triangle dir="right" /></ScrollEnd>
            <ZoomTools>
              <button aria-label="Stile candele">
                <svg width="18" height="22" viewBox="0 0 18 22">
                  <path d="M12.500 0v22M3.500 9v13" stroke="#ddd" />
                  <rect x="9" y="3" width="7" height="16" fill="#18b818" />
                  <rect x="0.500" y="12" width="6" height="8" fill="#d33" />
                  <path d="M3 19l5-5v-3l4-3-1 3 2 1 3-1-3 4h-3l-5 5z" fill="#111" stroke="#ddd" />
                </svg>
              </button>
              <button aria-label="Adatta zoom">
                <svg width="21" height="22" viewBox="0 0 21 22">
                  <path d="M11 12l6 8" stroke="#bbb" strokeWidth="3" strokeLinecap="round" />
                  <circle cx="7.500" cy="8" r="6" fill="#69747c" stroke="#9aa4aa" strokeWidth="1.500" />
                  <path d="M18 2v10M16 4l2-3 2 3M16 10l2 3 2-3M1 19h9M3 17l-3 2 3 2M8 17l3 2-3 2" fill="none" stroke="#38b8f0" strokeWidth="1.300" />
                </svg>
              </button>
              <button aria-label="Riduci zoom"><Magnifier sign="-" /></button>
              <button aria-label="Aumenta zoom"><Magnifier sign="+" /></button>
            </ZoomTools>
          </BottomBar>
        </ChartSide>
      </Main>
    </Screen>
  );
}
